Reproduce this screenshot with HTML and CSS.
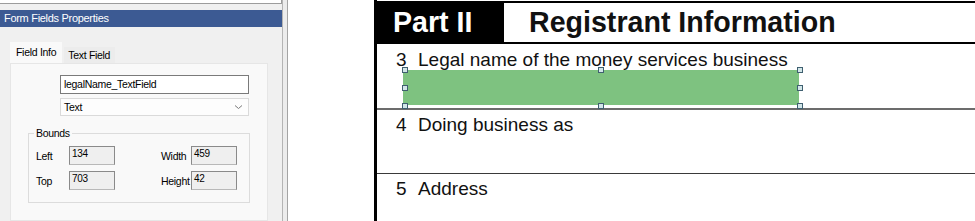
FILE: index.html
```html
<!DOCTYPE html>
<html lang="en">
<head>
    <meta charset="UTF-8">
    <title>Form Fields Properties</title>
    <link rel="stylesheet" href="styles.css">
</head>
<body>
    <div class="sidebar">
        <div class="top-strip"></div>
        <div class="titlebar">Form Fields Properties</div>
        <div class="tabs">
            <div class="tab active">Field Info</div>
            <div class="tab">Text Field</div>
        </div>
        <div class="tab-panel">
            <div class="textbox">legalName_TextField</div>
            <div class="select">
                <span>Text</span>
                <svg width="9" height="6" viewBox="0 0 9 6"><path d="M1 1.5 L4.5 4.5 L8 1.5" fill="none" stroke="#7a7a7a" stroke-width="1"/></svg>
            </div>
            <fieldset class="bounds">
                <legend>Bounds</legend>
                <div class="bounds-grid">
                    <span>Left</span><div class="num">134</div><span></span>
                    <span>Width</span><div class="num">459</div>
                    <span>Top</span><div class="num">703</div><span></span>
                    <span>Height</span><div class="num">42</div>
                </div>
            </fieldset>
        </div>
    </div>
    <div class="splitter"></div>
    <div class="spacer"></div>

    <div class="form">
        <div class="form-header">
            <div class="part">Part II</div>
            <div class="part-title">Registrant Information</div>
        </div>
        <div class="row row-name">
            <div class="row-label"><span class="num-label">3</span>Legal name of the money services business</div>
            <div class="field">
                <i class="handle h-l h-t"></i>
                <i class="handle h-c h-t"></i>
                <i class="handle h-r h-t"></i>
                <i class="handle h-l h-m"></i>
                <i class="handle h-r h-m"></i>
                <i class="handle h-l h-b"></i>
                <i class="handle h-c h-b"></i>
                <i class="handle h-r h-b"></i>
            </div>
        </div>
        <div class="row row-dba">
            <div class="row-label"><span class="num-label">4</span>Doing business as</div>
        </div>
        <div class="row row-address">
            <div class="row-label"><span class="num-label">5</span>Address</div>
        </div>
    </div>
</body>
</html>
```

FILE: styles.css
```css
html, body {
    margin: 0;
    padding: 0;
}
body {
    width: 975px;
    height: 221px;
    overflow: hidden;
    display: flex;
    background: #fff;
    font-family: "Liberation Sans", Arial, sans-serif;
    color: #000;
}

/* left dialog */
.sidebar {
    width: 282px;
    display: flex;
    flex-direction: column;
    background: #f0f0f0;
    font-size: 10.5px;
    letter-spacing: -0.3px;
}
.top-strip {
    height: 3px;
    background: #fff;
    border-bottom: 1px solid #9c9c9c;
    margin-bottom: 6px;
    border-right: 1px solid #9c9c9c;
}
.titlebar {
    height: 17px;
    line-height: 17px;
    background: #3c5a93;
    color: #fff;
    padding-left: 4px;
    font-size: 11px;
}
.tabs {
    display: flex;
    align-items: flex-end;
    margin: 15px 0 0 10px;
    height: 21px;
}
.tab {
    height: 16px;
    line-height: 16px;
    padding: 0 5px 0 4px;
    margin-left: 2px;
    background: #ececec;
}
.tab.active {
    height: 21px;
    line-height: 20px;
    padding: 0 6px;
    margin-left: 0;
    background: #f9f9f9;
}
.tab-panel {
    flex: 1;
    margin-left: 10px;
    width: 258px;
    box-sizing: border-box;
    background: #f9f9f9;
    border: 1px solid #e6e6e6;
    padding: 11px 0 0 17px;
}
.textbox {
    margin-left: 32px;
    width: 189px;
    height: 19px;
    box-sizing: border-box;
    border: 1px solid #7a7a7a;
    background: #fff;
    line-height: 17px;
    padding-left: 3px;
}
.select {
    margin: 4px 0 0 32px;
    width: 189px;
    height: 18px;
    box-sizing: border-box;
    border: 1px solid #dadada;
    background: #fdfdfd;
    padding: 0 5px 0 3px;
    display: flex;
    align-items: center;
    justify-content: space-between;
}
.bounds {
    margin: 11px 0 0 0;
    width: 222px;
    box-sizing: border-box;
    border: 1px solid #dcdcdc;
    padding: 6px 0 12px 5px;
}
.bounds legend {
    padding: 0 2px;
    line-height: 13px;
}
.bounds-grid {
    display: grid;
    grid-template-columns: 35px 46px 44px 32px 46px;
    grid-auto-rows: 19px;
    row-gap: 6px;
    align-items: center;
}
.bounds-grid span {
    padding-left: 2px;
}
.num {
    height: 19px;
    box-sizing: border-box;
    border: 1px solid #8a8a8a;
    border-bottom-color: #b8b8b8;
    background: #efefef;
    font-size: 10px;
    line-height: 14px;
    padding-left: 2px;
}

.splitter {
    width: 4px;
    background: #ececec;
    border-left: 1px solid #b4b4b4;
    border-right: 1px solid #a4a4a4;
}
.spacer {
    width: 86px;
}

/* PDF form */
.form {
    flex: 1;
    border-left: 3px solid #000;
    display: flex;
    flex-direction: column;
    font-size: 19px;
    color: #111;
}
.form-header {
    display: flex;
    margin-top: 1px;
    height: 39px;
    border-top: 2px solid #000;
    border-bottom: 2px solid #000;
    font-size: 28.6px;
    font-weight: bold;
    line-height: 39px;
}
.part {
    width: 111px;
    padding-left: 16px;
    background: #000;
    color: #fff;
}
.part-title {
    padding-left: 25px;
}
.row {
    border-bottom: 1px solid #3a3a3a;
}
.row-label {
    line-height: 22px;
    padding-left: 19px;
}
.num-label {
    display: inline-block;
    width: 22px;
}
.row-name {
    height: 64px;
    border-bottom: 2px solid #6c6c6c;
}
.row-name .row-label {
    padding-top: 5px;
}
.row-dba {
    height: 63px;
}
.row-dba .row-label {
    padding-top: 4px;
}
.row-address {
    flex: 1;
    border-bottom: none;
}
.row-address .row-label {
    padding-top: 4px;
}

.field {
    position: relative;
    margin: -1px 0 0 26px;
    width: 396px;
    height: 35px;
    background: #7ec280;
}
.handle {
    position: absolute;
    width: 4px;
    height: 4px;
    background: #d2e6e8;
    border: 1px solid #3f5f70;
}
.h-l { left: -1px; }
.h-c { left: 195px; }
.h-r { right: -4px; }
.h-t { top: -3px; }
.h-m { top: 15px; }
.h-b { bottom: -4px; }
```
